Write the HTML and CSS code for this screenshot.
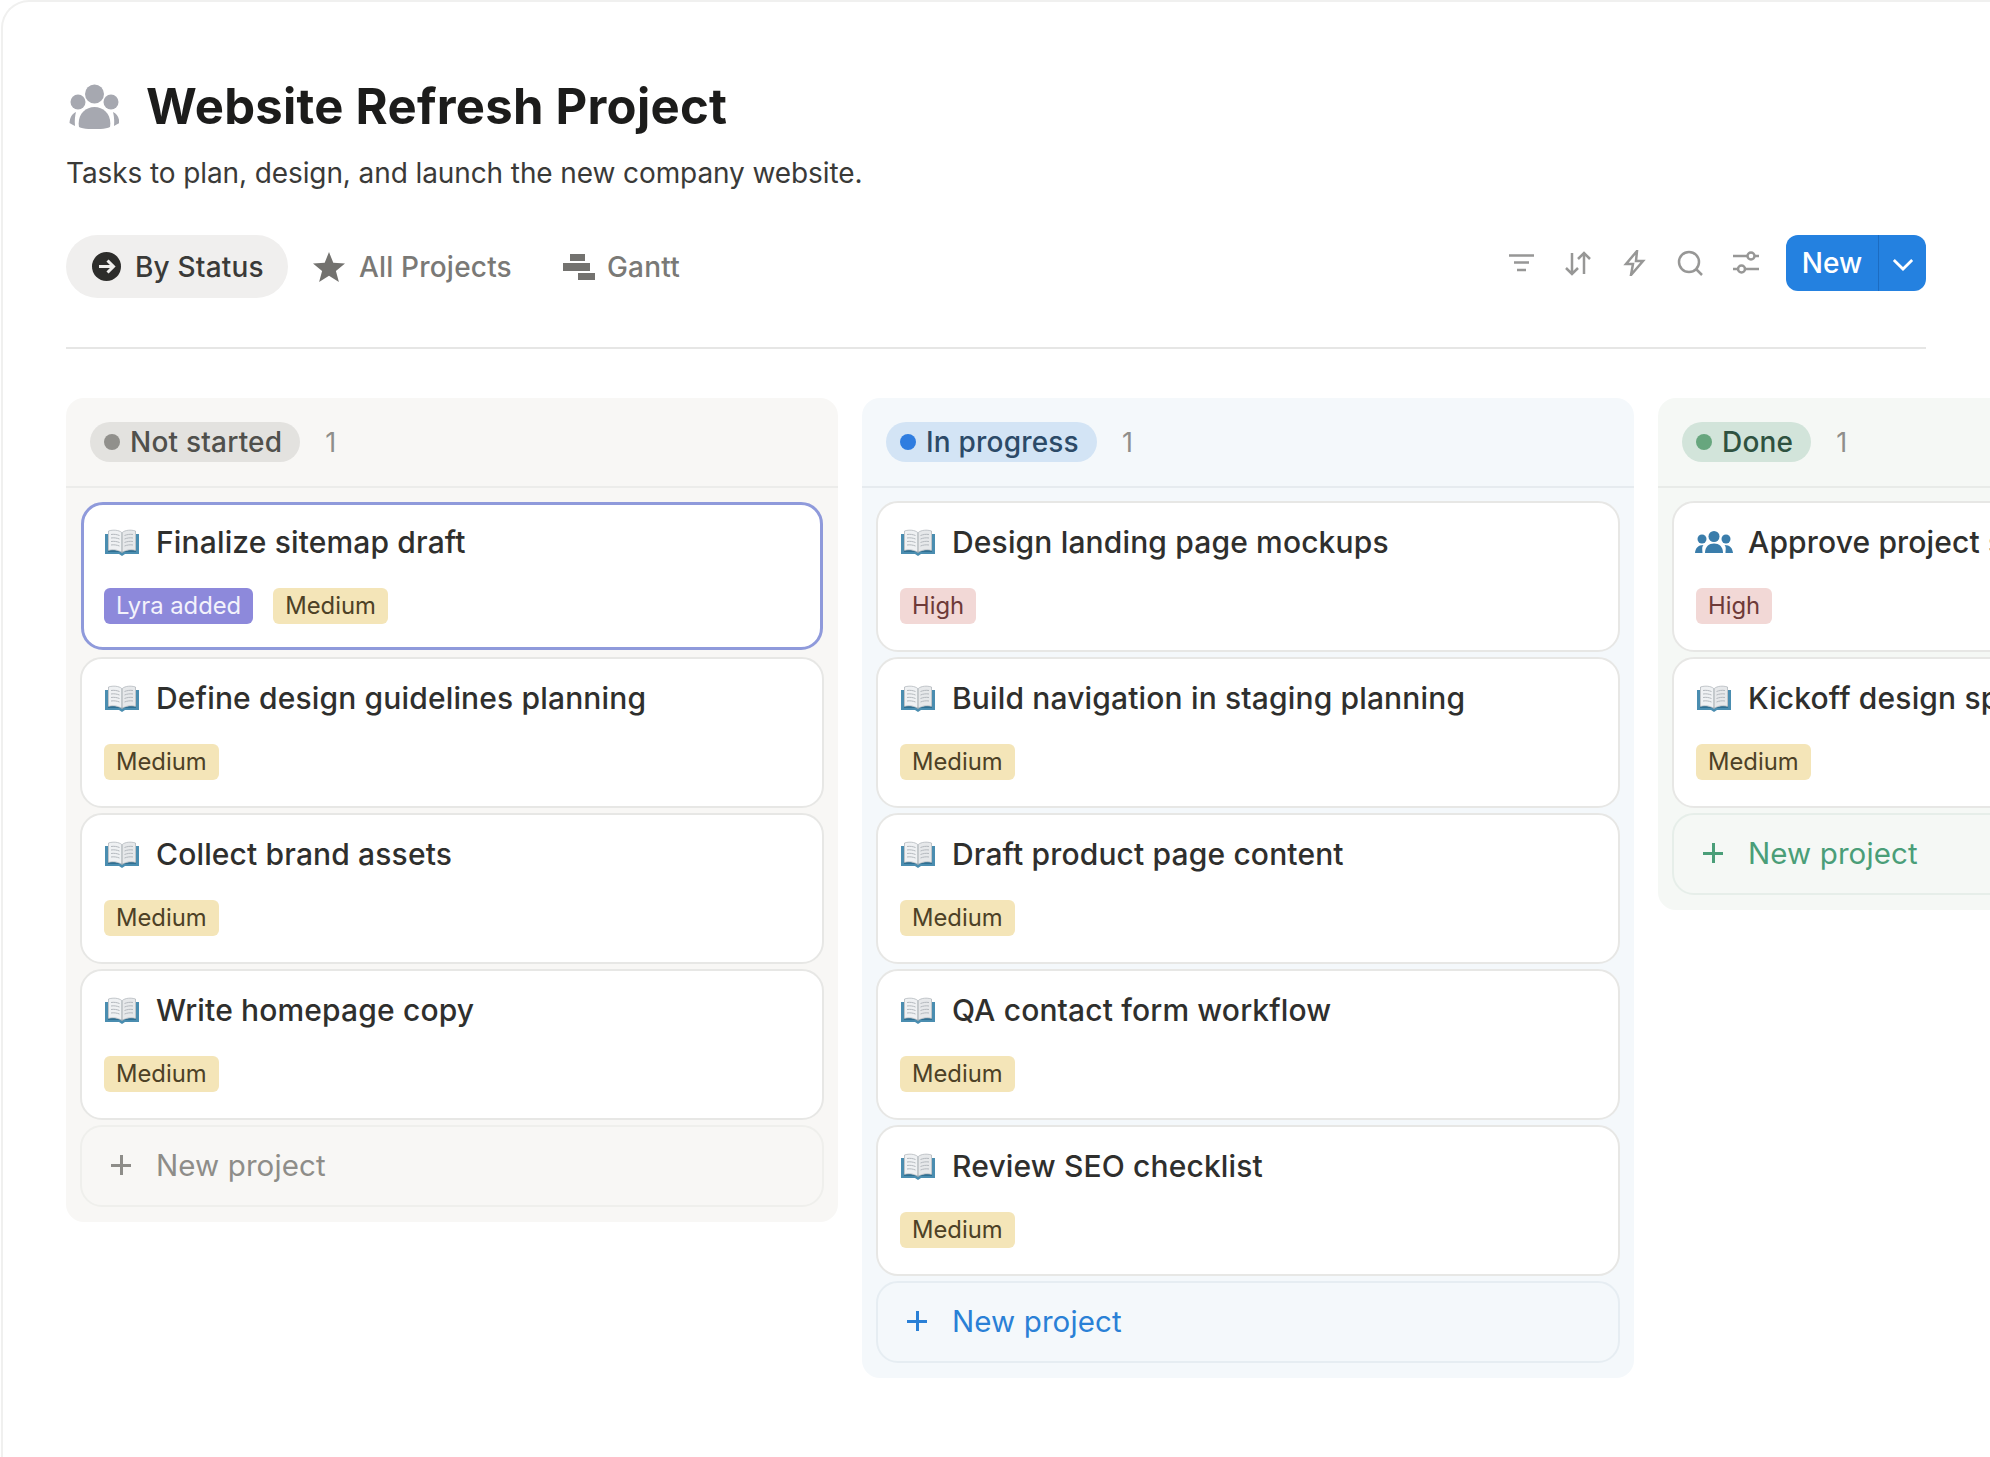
FILE: index.html
```html
<!DOCTYPE html>
<html lang="en">
<head>
<meta charset="utf-8">
<title>Website Refresh Project</title>
<link rel="stylesheet" href="styles.css">
</head>
<body>
<svg class="sprite" aria-hidden="true">
  <symbol id="book" viewBox="0 0 34 27">
    <path fill="#4a8db0" d="M0 5H3V22H31V5H34V25H20L17 27L14 25H0Z"/>
    <path fill="#2f6f92" d="M3 21C8 20 14 21 17 24C20 21 26 20 31 21V23H3Z"/>
    <path fill="#eff1f3" stroke="#a9afb5" stroke-width=".7" d="M3.5 2C8 .5 14 1 16.7 3.5V23.5C13.500 21 8 20 3.500 21.500Z"/>
    <path fill="#e6e8ea" stroke="#a9afb5" stroke-width=".7" d="M30.500 2C26 .5 20 1 17.300 3.500V23.500C20.500 21 26 20 30.500 21.500Z"/>
    <path fill="none" stroke="#b4b9be" stroke-width="1" d="M6 5.500C9 5 12 5.500 14.500 6.500M6 9C9 8.500 12 9 14.500 10M6 12.500C9 12 12 12.500 14.500 13.500M6 16C9 15.500 12 16 14.500 17M28 5.500C25 5 22 5.500 19.500 6.500M28 9C25 8.500 22 9 19.500 10M28 12.500C25 12 22 12.500 19.500 13.500M28 16C25 15.500 22 16 19.500 17"/>
  </symbol>
  <symbol id="people-big" viewBox="9 12 50 46">
    <circle cx="34.500" cy="23" r="9.500"/><circle cx="18" cy="31" r="7.500"/><circle cx="51" cy="31" r="7.500"/>
    <path d="M19 56C17 44 25 36 34.500 36C44 36 52 44 50 56C44 59 25 59 19 56Z"/>
    <path d="M9.500 52C10 46 12 43 16 41C15 45 14.500 49 15 55C13 54 11 53 9.500 52Z"/>
    <path d="M59.500 52C59 46 57 43 53 41C54 45 54.500 49 54 55C56 54 58 53 59.500 52Z"/>
  </symbol>
  <symbol id="people-small" viewBox="0 0 38 22">
    <circle cx="19" cy="5.500" r="5.500"/><circle cx="7" cy="8" r="4.500"/><circle cx="31" cy="8" r="4.500"/>
    <path d="M10 22C10 15.500 14 12.500 19 12.500C24 12.500 28 15.500 28 22Z"/>
    <path d="M0 22C.5 17 3 14 8.500 14C6.500 16 7.500 19 7.500 22Z"/>
    <path d="M38 22C37.500 17 35 14 29.500 14C31.500 16 30.500 19 30.500 22Z"/>
  </symbol>
</svg>

<main class="frame">
  <header class="title-row">
    <svg class="title-icon"><use href="#people-big"/></svg>
    <h1 class="title">Website Refresh Project</h1>
  </header>
  <p class="desc">Tasks to plan, design, and launch the new company website.</p>

  <nav class="toolbar">
    <div class="views">
      <a class="view view-active">
        <svg class="view-arrow" viewBox="0 0 29 29"><circle cx="14.500" cy="14.500" r="14.500" fill="#2d2d2b"/><path d="M7 14.500H21M15.500 8.500L21.500 14.500L15.500 20.500" fill="none" stroke="#f0efed" stroke-width="3"/></svg>
        By Status
      </a>
      <a class="view">
        <svg class="view-star" viewBox="0 0 32 30"><path fill="#73726f" d="M16 0L20.300 10.800L32 11.500L22.900 18.900L25.900 30L16 23.800L6.100 30L9.100 18.900L0 11.500L11.700 10.800Z"/></svg>
        All Projects
      </a>
      <a class="view">
        <svg class="view-gantt" viewBox="0 0 32 26"><path fill="#73726f" d="M7 0H22V7H7ZM0 9H27V17H0ZM15 19H32V26H15Z"/></svg>
        Gantt
      </a>
    </div>
    <div class="actions">
      <svg class="tool" viewBox="0 0 26 26"><path d="M0 5.500H25M5 12.500H20M8 20H17"/></svg>
      <svg class="tool" viewBox="0 0 26 26"><path d="M7 3V24M1 18L7 24L13 18M19 24V3M13 9L19 3L25 9"/></svg>
      <svg class="tool" viewBox="0 0 26 26"><path d="M16 1L5 14H12L10 25L22 11H15Z"/></svg>
      <svg class="tool" viewBox="0 0 26 26"><circle cx="12" cy="12" r="10"/><path d="M19.500 19.500L25 25"/></svg>
      <svg class="tool" viewBox="0 0 26 26"><path d="M0 6H14M22 6H26M0 19H5M12 19H26"/><circle cx="18" cy="6" r="3.500"/><circle cx="8.500" cy="19" r="3.500"/></svg>
      <div class="new-btn">
        <span class="new-label">New</span>
        <span class="new-caret"><svg viewBox="0 0 24 14"><path d="M2 2L12 12L22 2"/></svg></span>
      </div>
    </div>
  </nav>

  <section class="board">
    <div class="col col-gray">
      <div class="col-head"><span class="status"><i class="dot"></i>Not started</span><span class="count">1</span></div>
      <div class="col-body">
        <article class="card card-selected">
          <div class="card-title"><svg class="book"><use href="#book"/></svg>Finalize sitemap draft</div>
          <div class="tags"><span class="tag tag-lyra">Lyra added</span><span class="tag tag-medium">Medium</span></div>
        </article>
        <article class="card">
          <div class="card-title"><svg class="book"><use href="#book"/></svg>Define design guidelines planning</div>
          <div class="tags"><span class="tag tag-medium">Medium</span></div>
        </article>
        <article class="card">
          <div class="card-title"><svg class="book"><use href="#book"/></svg>Collect brand assets</div>
          <div class="tags"><span class="tag tag-medium">Medium</span></div>
        </article>
        <article class="card">
          <div class="card-title"><svg class="book"><use href="#book"/></svg>Write homepage copy</div>
          <div class="tags"><span class="tag tag-medium">Medium</span></div>
        </article>
        <div class="add"><span class="plus"></span>New project</div>
      </div>
    </div>

    <div class="col col-blue">
      <div class="col-head"><span class="status"><i class="dot"></i>In progress</span><span class="count">1</span></div>
      <div class="col-body">
        <article class="card">
          <div class="card-title"><svg class="book"><use href="#book"/></svg>Design landing page mockups</div>
          <div class="tags"><span class="tag tag-high">High</span></div>
        </article>
        <article class="card">
          <div class="card-title"><svg class="book"><use href="#book"/></svg>Build navigation in staging planning</div>
          <div class="tags"><span class="tag tag-medium">Medium</span></div>
        </article>
        <article class="card">
          <div class="card-title"><svg class="book"><use href="#book"/></svg>Draft product page content</div>
          <div class="tags"><span class="tag tag-medium">Medium</span></div>
        </article>
        <article class="card">
          <div class="card-title"><svg class="book"><use href="#book"/></svg>QA contact form workflow</div>
          <div class="tags"><span class="tag tag-medium">Medium</span></div>
        </article>
        <article class="card">
          <div class="card-title"><svg class="book"><use href="#book"/></svg>Review SEO checklist</div>
          <div class="tags"><span class="tag tag-medium">Medium</span></div>
        </article>
        <div class="add"><span class="plus"></span>New project</div>
      </div>
    </div>

    <div class="col col-green">
      <div class="col-head"><span class="status"><i class="dot"></i>Done</span><span class="count">1</span></div>
      <div class="col-body">
        <article class="card">
          <div class="card-title"><svg class="people"><use href="#people-small"/></svg>Approve project scope</div>
          <div class="tags"><span class="tag tag-high">High</span></div>
        </article>
        <article class="card">
          <div class="card-title"><svg class="book"><use href="#book"/></svg>Kickoff design sprint</div>
          <div class="tags"><span class="tag tag-medium">Medium</span></div>
        </article>
        <div class="add"><span class="plus"></span>New project</div>
      </div>
    </div>
  </section>
</main>
</body>
</html>
```

FILE: styles.css
```css
* { box-sizing: border-box; }
html, body { margin: 0; height: 100%; overflow: hidden; background: #fff; }
body { font-family: "Inter", "Liberation Sans", sans-serif; color: #2b2b29; }
.sprite { display: none; }

.frame {
  height: 1457px;
  width: 1990px;
  padding: 79px 64px 0 63px;
  margin-left: 1px;
  border-top: 2px solid #f0f0ef;
  border-left: 2px solid #f0f0ef;
  border-top-left-radius: 28px;
  overflow: hidden;
}

.title-row { display: flex; align-items: center; gap: 27px; height: 50px; padding-left: 3px; }
.title-icon { width: 50px; height: 46px; fill: #a6a8b0; flex: none; }
.title { margin: 0; padding-top: 1px; font-size: 49px; font-weight: 700; color: #1c1c1b; letter-spacing: .27px; line-height: 50px; }
.desc { margin: 25px 0 0; font-size: 28px; line-height: 34px; letter-spacing: -.1px; color: #3a3a38; }

.toolbar { display: flex; justify-content: space-between; align-items: flex-start; width: 1860px; margin-top: 45px; padding-bottom: 49px; border-bottom: 2px solid #e6e6e5; }
.views { display: flex; align-items: center; }
.view { display: flex; align-items: center; height: 63px; padding: 0 25px; font-size: 28px; font-weight: 500; letter-spacing: .2px; color: #7a7976; }
.view-active { background: #f0efee; border-radius: 32px; color: #3a3a38; padding: 0 24px 0 26px; gap: 14px; }
.view-arrow { width: 29px; height: 29px; }
.view-star { width: 32px; height: 30px; margin-right: 14px; }
.view-gantt { width: 32px; height: 26px; margin-right: 12px; }
.view:nth-child(2) { padding-right: 26px; }

.actions { display: flex; align-items: center; gap: 30px; height: 56px; }
.tool { width: 26px; height: 26px; fill: none; stroke: #979796; stroke-width: 2.5; }
.new-btn { display: flex; height: 56px; width: 140px; margin-left: -3px; background: #2481e0; border-radius: 12px; color: #fff; }
.new-label { width: 93px; display: flex; align-items: center; justify-content: center; font-size: 28px; font-weight: 500; border-right: 1px solid #1c6cc2; }
.new-caret { flex: 1; display: flex; align-items: center; justify-content: center; }
.new-caret svg { width: 22px; height: 13px; fill: none; stroke: #fff; stroke-width: 3; margin-top: 3px; }

.board { display: flex; align-items: flex-start; gap: 24px; margin-top: 49px; width: 2600px; }
.col { flex: none; width: 772px; border-radius: 18px; }
.col-head { display: flex; align-items: center; height: 90px; padding: 0 24px; gap: 25px; border-bottom: 2px solid; }
.status { display: flex; align-items: center; gap: 10px; height: 40px; padding: 0 18px 0 14px; border-radius: 20px; font-size: 28px; font-weight: 500; letter-spacing: .2px; }
.dot { width: 16px; height: 16px; border-radius: 50%; }
.count { font-size: 27px; color: #8f8e8b; }
.col-body { display: flex; flex-direction: column; gap: 5px; padding: 13px 14px 15px 14px; }

.card { height: 151px; padding: 20px 22px 0; background: #fff; border: 2px solid #e7e7e5; border-radius: 22px; }
.card-selected { height: 148px; margin: 1px 1px 2px; border: 3px solid #8f9adb; padding: 18px 20px 0; }
.card-title { display: flex; align-items: center; gap: 17px; height: 38px; padding-left: 1px; font-size: 30px; font-weight: 500; letter-spacing: .15px; color: #2f2f2d; white-space: nowrap; }
.book { width: 34px; height: 27px; flex: none; }
.people { width: 38px; height: 22px; flex: none; fill: #3a7dab; margin-left: -2px; margin-right: -2px; }
.tags { display: flex; gap: 20px; margin-top: 27px; }
.tag { display: flex; align-items: center; height: 36px; padding: 0 12px 1px; border-radius: 6px; font-size: 23.8px; }
.tag-lyra { background: #8d89db; color: #f3f2fb; }
.tag-medium { background: #f4e5b8; color: #4d4126; }
.tag-high { background: #f2d8d6; color: #6e3a38; }

.add { display: flex; align-items: center; gap: 25px; height: 82px; padding: 0 0 2px 29px; border: 2px solid; border-radius: 22px; font-size: 29.5px; letter-spacing: .1px; }
.plus { width: 20px; height: 20px; background: linear-gradient(currentColor, currentColor) center / 100% 3px no-repeat, linear-gradient(currentColor, currentColor) center / 3px 100% no-repeat; }

.col-gray { background: #f8f7f5; }
.col-gray .col-head { border-color: #ececea; }
.col-gray .status { background: #e3e2df; color: #50504c; }
.col-gray .dot { background: #91908c; }
.col-gray .add { border-color: #efefec; color: #8e8d89; }

.col-blue { background: #f4f8fb; }
.col-blue .col-head { border-color: #e6ebef; }
.col-blue .status { background: #d3e4f5; color: #2c4a68; }
.col-blue .dot { background: #2f7de0; }
.col-blue .add { border-color: #e6edf2; color: #2a80d6; }

.col-green { background: #f5f8f5; }
.col-green .col-head { border-color: #e8ebe8; }
.col-green .status { background: #d2e4da; color: #2f5240; }
.col-green .dot { background: #67a67e; }
.col-green .add { border-color: #e6eee9; color: #4a9e78; }
```
